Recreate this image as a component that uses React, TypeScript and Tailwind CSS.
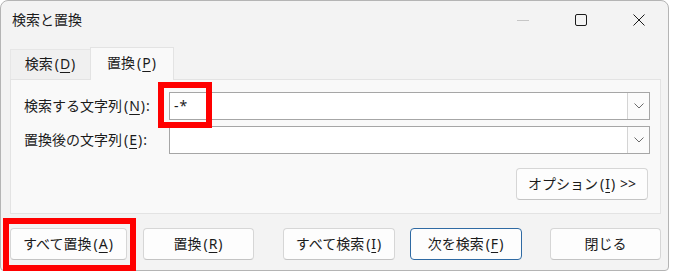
import type { JSX, ReactNode } from "react";

const font = "font-['Noto_Sans','Noto_Sans_CJK_JP',sans-serif]";

// mnemonic: "(X)" with the letter underlined, spaced like the Windows UI font
function Key({ children }: { children: ReactNode }) {
  return (
    <>
      <span className="ml-[2px] mr-[1px]">(</span>
      <span className="underline underline-offset-[3px] decoration-1">{children}</span>
      <span className="ml-[1px] mr-[1px]">)</span>
    </>
  );
}

function Combo({ value }: { value?: string }) {
  return (
    <div className="flex h-[28px] w-[481px] border border-[#a6a6a6] bg-white">
      <div className="flex flex-1 items-center pl-[4px] text-[14px] leading-none tracking-[1px]">{value}</div>
      <div className="flex w-[22px] items-center justify-center border-l border-[#d4d4d4] bg-[#fbfbfb]">
        <svg width="10" height="6" viewBox="0 0 10 6">
          <polyline points="0.5,0.5 5,5 9.5,0.5" fill="none" stroke="#6b6b6b" strokeWidth="1" />
        </svg>
      </div>
    </div>
  );
}

function Btn({ children, className, focus }: { children: ReactNode; className: string; focus?: boolean }) {
  return (
    <div
      className={
        "flex h-[32px] items-center justify-center rounded-[4px] border bg-[#fdfdfd] text-[14px] leading-none " +
        (focus ? "border-[#2f6aa3] " : "border-[#d6d6d6] border-b-[#c4c4c4] ") +
        className
      }
    >
      {children}
    </div>
  );
}

export default function App(): JSX.Element {
  return (
    <div className={"relative h-[271px] w-[669px] rounded-t-[8px] rounded-b-[4px] border border-[#b4b4b4] bg-[#f3f3f3] text-[#1b1b1b] " + font}>
      {/* title bar */}
      <div className="flex h-[38px] items-center">
        <span className="pl-[11px] text-[14px] leading-none">検索と置換</span>
        <div className="ml-auto flex">
          <div className="flex w-[58px] items-center justify-center">
            <div className="h-px w-[12px] bg-[#c6c6c6]" />
          </div>
          <div className="flex w-[58px] items-center justify-center">
            <svg width="12" height="12" viewBox="0 0 12 12">
              <rect x="0.5" y="0.5" width="11" height="11" rx="1.5" fill="none" stroke="#1b1b1b" />
            </svg>
          </div>
          <div className="flex w-[58px] items-center justify-center">
            <svg width="12" height="12" viewBox="0 0 12 12">
              <path d="M0.5 0.5L11.5 11.5M11.5 0.5L0.5 11.5" stroke="#1b1b1b" strokeWidth="1" />
            </svg>
          </div>
        </div>
      </div>

      <div className="pl-[9px] pt-[8px]">
        {/* tabs */}
        <div className="flex h-[32px] items-end">
          <div className="flex h-[30px] w-[80px] items-center justify-center border-l border-t border-[#e6e6e6] bg-[#f0f0f0] pb-[1px] text-[14px] leading-none">
            検索<Key>D</Key>
          </div>
          <div className="relative z-10 -mb-px flex h-[33px] w-[84px] items-center justify-center border border-b-0 border-[#e3e3e3] bg-[#f9f9f9] pb-[2px] text-[14px] leading-none">
            置換<Key>P</Key>
          </div>
        </div>

        {/* panel */}
        <div className="flex h-[135px] w-[651px] flex-col border border-[#e3e3e3] bg-[#f9f9f9] pl-[13px] pt-[12px]">
          <div className="flex items-center">
            <span className="w-[145px] text-[14px] leading-none">
              検索する文字列<Key>N</Key>:
            </span>
            <Combo value="-*" />
          </div>
          <div className="mt-[6px] flex items-center">
            <span className="w-[145px] text-[14px] leading-none">
              置換後の文字列<Key>E</Key>:
            </span>
            <Combo />
          </div>
          <Btn className="ml-[492px] mt-[14px] w-[132px]">
            オプション<Key>I</Key>&nbsp;&gt;&gt;
          </Btn>
        </div>

        {/* buttons */}
        <div className="mt-[14px] flex">
          <Btn className="w-[117px]">
            すべて置換<Key>A</Key>
          </Btn>
          <Btn className="ml-[16px] w-[111px]">
            置換<Key>R</Key>
          </Btn>
          <Btn className="ml-[29px] w-[112px]">
            すべて検索<Key>I</Key>
          </Btn>
          <Btn focus className="ml-[15px] w-[112px]">
            次を検索<Key>F</Key>
          </Btn>
          <Btn className="ml-[28px] w-[111px]">閉じる</Btn>
        </div>
      </div>

      {/* red highlight boxes */}
      <div className="absolute left-[157px] top-[81px] h-[46px] w-[54px] border-[6px] border-[#ff0000]" />
      <div className="absolute left-[2px] top-[217px] h-[53px] w-[133px] border-[6px] border-[#ff0000]" />
    </div>
  );
}
